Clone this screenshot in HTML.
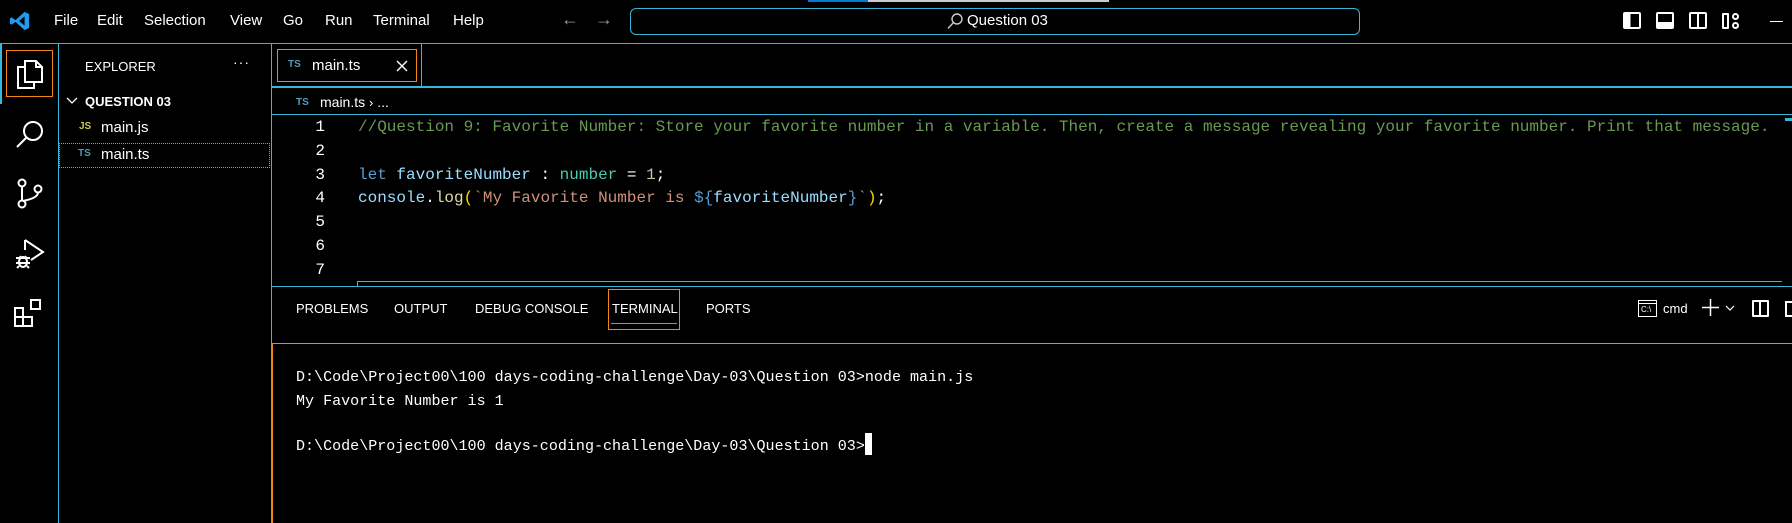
<!DOCTYPE html>
<html><head><meta charset="utf-8"><style>
*{margin:0;padding:0;box-sizing:border-box}
body{width:1792px;height:523px;background:#000;overflow:hidden;position:relative;font-family:"Liberation Sans",sans-serif;color:#fff}
.a{position:absolute;white-space:pre}
.menu{top:12px;font-size:15px;color:#fff}
.mono{font-family:"Liberation Mono",monospace}
.code{font-size:16px;left:358px}
.ln{font-size:16px;width:40px;text-align:right;left:285px}
.term{font-size:15.05px;left:296px}
.ptab{top:301px;font-size:13px}
</style></head><body>
<div class="a" style="left:808px;top:0;width:60px;height:2px;background:#0078d4"></div>
<div class="a" style="left:868px;top:0;width:241px;height:2px;background:#ccc"></div>
<svg class="a" style="left:9px;top:10px" width="22" height="22" viewBox="0 0 24 24"><path d="M17 2 L22 4.5 V19.5 L17 22 L7 13 L3 16 L1 15 V9 L3 8 L7 11 Z M17 7 L11 12 L17 17 Z" fill="#1f9cf0"/></svg>
<div class="a menu" style="left:54px">File</div>
<div class="a menu" style="left:97px">Edit</div>
<div class="a menu" style="left:144px">Selection</div>
<div class="a menu" style="left:230px">View</div>
<div class="a menu" style="left:283px">Go</div>
<div class="a menu" style="left:325px">Run</div>
<div class="a menu" style="left:373px">Terminal</div>
<div class="a menu" style="left:453px">Help</div>
<div class="a" style="left:561px;top:9px;font-size:18px;color:#999">←</div>
<div class="a" style="left:595px;top:9px;font-size:18px;color:#999">→</div>
<div class="a" style="left:630px;top:8px;width:730px;height:27px;border:1px solid #38b8d8;border-radius:6px"></div>
<svg class="a" style="left:946px;top:12px" width="18" height="18" viewBox="0 0 18 18"><circle cx="11" cy="7" r="5" fill="none" stroke="#ccc" stroke-width="1.4"/><path d="M7.5 10.5 L2 16.5" stroke="#ccc" stroke-width="1.4"/></svg>
<div class="a" style="left:967px;top:12px;font-size:15px">Question 03</div>
<div class="a" style="left:1623px;top:12px;width:18px;height:17px;border:2px solid #fff;border-radius:2px;background:linear-gradient(90deg,#fff 40%,transparent 40%)"></div>
<div class="a" style="left:1656px;top:12px;width:18px;height:17px;border:2px solid #fff;border-radius:2px;background:linear-gradient(0deg,#fff 40%,transparent 40%)"></div>
<div class="a" style="left:1689px;top:12px;width:18px;height:17px;border:2px solid #fff;border-radius:2px"></div>
<div class="a" style="left:1697px;top:12px;width:2px;height:17px;background:#fff"></div>
<div class="a" style="left:1722px;top:13px;width:7px;height:16px;border:2px solid #fff;border-radius:1px"></div>
<div class="a" style="left:1732px;top:13px;width:7px;height:7px;border:2px solid #fff;border-radius:50%"></div>
<div class="a" style="left:1732px;top:22px;width:7px;height:7px;border:2px solid #fff;border-radius:50%"></div>
<div class="a" style="left:1770px;top:21px;width:13px;height:1px;background:#fff"></div>
<div class="a" style="left:0;top:43px;width:1792px;height:1px;background:#38b8d8"></div>
<div class="a" style="left:58px;top:43px;width:1px;height:480px;background:#38b8d8"></div>
<div class="a" style="left:0;top:43px;width:2px;height:61px;background:#38b8d8"></div>
<div class="a" style="left:6px;top:50px;width:47px;height:47px;border:1px solid #f38518"></div>
<svg class="a" style="left:14px;top:58px" width="30" height="32" viewBox="0 0 30 32" fill="none" stroke="#fff" stroke-width="2"><path d="M11 3 H22 L28 9 V24 H11 Z"/><path d="M22 3 V9 H28"/><path d="M11 9 H4 V30 H20 V24"/></svg>
<svg class="a" style="left:14px;top:118px" width="32" height="32" viewBox="0 0 32 32" fill="none" stroke="#fff" stroke-width="2"><circle cx="19" cy="13" r="9"/><path d="M12.5 19.5 L3 29"/></svg>
<svg class="a" style="left:14px;top:178px" width="32" height="32" viewBox="0 0 32 32" fill="none" stroke="#fff" stroke-width="2"><circle cx="8" cy="5" r="3.5"/><circle cx="8" cy="26" r="3.5"/><circle cx="24" cy="11" r="3.5"/><path d="M8 8.5 V22.5 M24 14.5 Q24 20 9 23"/></svg>
<svg class="a" style="left:14px;top:238px" width="32" height="32" viewBox="0 0 32 32" fill="none" stroke="#fff" stroke-width="2"><path d="M11 2 L29 14 L17 22"/><path d="M11 2 V12"/><ellipse cx="9" cy="24" rx="4" ry="5"/><path d="M2 20 H16 M2 25 H16 M3 30 L5 28 M15 30 L13 28 M6 18 L7 20 M12 18 L11 20"/></svg>
<svg class="a" style="left:13px;top:298px" width="32" height="32" viewBox="0 0 32 32" fill="none" stroke="#fff" stroke-width="2"><rect x="2" y="10" width="8" height="9"/><rect x="2" y="19" width="8" height="9"/><rect x="10" y="19" width="9" height="9"/><rect x="18" y="2" width="9" height="9"/></svg>
<div class="a" style="left:271px;top:43px;width:1px;height:480px;background:#38b8d8"></div>
<div class="a" style="left:85px;top:59px;font-size:13px">EXPLORER</div>
<div class="a" style="left:233px;top:54px;font-size:14px;letter-spacing:1px">···</div>
<svg class="a" style="left:66px;top:96px" width="12" height="10" viewBox="0 0 12 10"><path d="M1 2 L6 7 L11 2" fill="none" stroke="#fff" stroke-width="1.3"/></svg>
<div class="a" style="left:85px;top:94px;font-size:13px;font-weight:bold">QUESTION 03</div>
<div class="a" style="left:79px;top:121px;font-size:10px;font-weight:bold;color:#cbcb41">JS</div>
<div class="a" style="left:101px;top:119px;font-size:15px">main.js</div>
<div class="a" style="left:59px;top:143px;width:211px;height:25px;border:1px dotted #f38518"></div>
<div class="a" style="left:78px;top:148px;font-size:10px;font-weight:bold;color:#519aba">TS</div>
<div class="a" style="left:101px;top:146px;font-size:15px">main.ts</div>
<div class="a" style="left:277px;top:49px;width:140px;height:33px;border:1px solid #f38518"></div>
<div class="a" style="left:421px;top:43px;width:1px;height:44px;background:#38b8d8"></div>
<div class="a" style="left:288px;top:59px;font-size:10px;font-weight:bold;color:#519aba">TS</div>
<div class="a" style="left:312px;top:57px;font-size:15px">main.ts</div>
<svg class="a" style="left:396px;top:60px" width="12" height="12" viewBox="0 0 12 12"><path d="M1 1 L11 11 M11 1 L1 11" stroke="#fff" stroke-width="1.4"/></svg>
<div class="a" style="left:271px;top:86px;width:1521px;height:2px;background:#38b8d8"></div>
<div class="a" style="left:296px;top:97px;font-size:10px;font-weight:bold;color:#519aba">TS</div>
<div class="a" style="left:320px;top:94px;font-size:14px">main.ts <span style="font-size:13px">›</span> ...</div>
<div class="a" style="left:271px;top:114px;width:1521px;height:1px;background:#38b8d8"></div>
<div class="a mono ln" style="top:118px">1</div>
<div class="a mono ln" style="top:142px">2</div>
<div class="a mono ln" style="top:166px">3</div>
<div class="a mono ln" style="top:189px">4</div>
<div class="a mono ln" style="top:213px">5</div>
<div class="a mono ln" style="top:237px">6</div>
<div class="a mono ln" style="top:261px">7</div>
<div class="a mono code" style="top:118px;color:#6a9955">//Question 9: Favorite Number: Store your favorite number in a variable. Then, create a message revealing your favorite number. Print that message.</div>
<div class="a mono code" style="top:166px"><span style="color:#569cd6">let</span> <span style="color:#9cdcfe">favoriteNumber</span> : <span style="color:#4ec9b0">number</span> = <span style="color:#b5cea8">1</span>;</div>
<div class="a mono code" style="top:189px"><span style="color:#9cdcfe">console</span>.<span style="color:#dcdcaa">log</span><span style="color:#ffd700">(</span><span style="color:#ce9178">`My Favorite Number is </span><span style="color:#569cd6">${</span><span style="color:#9cdcfe">favoriteNumber</span><span style="color:#569cd6">}</span><span style="color:#ce9178">`</span><span style="color:#ffd700">)</span>;</div>
<div class="a" style="left:1785px;top:118px;width:7px;height:3px;background:#38b8d8"></div>
<div class="a" style="left:357px;top:281px;width:1425px;height:1px;background:#f38518"></div>
<div class="a" style="left:357px;top:281px;width:1px;height:5px;background:#f38518"></div>
<div class="a" style="left:271px;top:286px;width:1521px;height:1px;background:#38b8d8"></div>
<div class="a ptab" style="left:296px">PROBLEMS</div>
<div class="a ptab" style="left:394px">OUTPUT</div>
<div class="a ptab" style="left:475px">DEBUG CONSOLE</div>
<div class="a ptab" style="left:612px">TERMINAL</div>
<div class="a ptab" style="left:706px">PORTS</div>
<div class="a" style="left:608px;top:289px;width:72px;height:41px;border:1px solid #f38518"></div>
<div class="a" style="left:611px;top:323px;width:66px;height:1px;background:#38b8d8"></div>
<div class="a" style="left:1638px;top:300px;width:19px;height:17px;border:1.5px solid #fff"></div>
<div class="a" style="left:1638px;top:303px;width:19px;height:1px;background:#fff"></div>
<div class="a" style="left:1641px;top:305px;font-size:8px">C:\</div>
<div class="a" style="left:1663px;top:301px;font-size:13px">cmd</div>
<svg class="a" style="left:1702px;top:299px" width="17" height="17" viewBox="0 0 17 17"><path d="M8.5 0 V17 M0 8.5 H17" stroke="#fff" stroke-width="1.5"/></svg>
<svg class="a" style="left:1725px;top:305px" width="10" height="7" viewBox="0 0 10 7"><path d="M1 1 L5 5 L9 1" fill="none" stroke="#fff" stroke-width="1.2"/></svg>
<div class="a" style="left:1752px;top:300px;width:17px;height:17px;border:2px solid #fff;border-radius:1px"></div>
<div class="a" style="left:1759px;top:300px;width:2px;height:17px;background:#fff"></div>
<div class="a" style="left:1785px;top:301px;width:7px;height:16px;border:2px solid #fff;border-right:none"></div>
<div class="a" style="left:272px;top:343px;width:1520px;height:1px;background:#f38518"></div>
<div class="a" style="left:272px;top:343px;width:1px;height:180px;background:#f38518"></div>
<div class="a mono term" style="top:368px">D:\Code\Project00\100 days-coding-challenge\Day-03\Question 03&gt;node main.js</div>
<div class="a mono term" style="top:392px">My Favorite Number is 1</div>
<div class="a mono term" style="top:433px">D:\Code\Project00\100 days-coding-challenge\Day-03\Question 03&gt;<span style="display:inline-block;width:7px;height:22px;background:#fff;vertical-align:-5px"></span></div>
</body></html>
